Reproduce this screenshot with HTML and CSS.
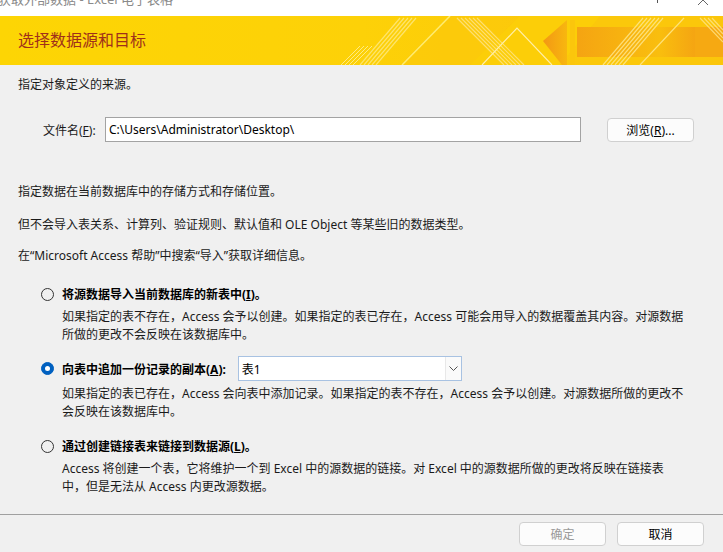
FILE: index.html
```html
<!DOCTYPE html>
<html lang="zh-CN">
<head>
<meta charset="utf-8">
<title>获取外部数据 - Excel 电子表格</title>
<link rel="stylesheet" href="styles.css">
</head>
<body>
<div class="window">
  <div class="titlebar">
    <span class="title-text">获取外部数据 - Excel 电子表格</span>
    <svg class="title-icons" width="723" height="16" viewBox="0 0 723 16">
      <line x1="657.5" y1="0" x2="657.5" y2="3" stroke="#555" stroke-width="1"/>
      <polyline points="698,5 703,0 708,5" fill="none" stroke="#666" stroke-width="1"/>
    </svg>
  </div>

  <div class="header">
    <svg class="header-art" width="723" height="49" viewBox="0 0 723 49" preserveAspectRatio="none">
      <defs>
        <linearGradient id="bg" x1="0" y1="0" x2="1" y2="0">
          <stop offset="0" stop-color="#fdd504"/>
          <stop offset="0.5" stop-color="#fdd108"/>
          <stop offset="1" stop-color="#fac40c"/>
        </linearGradient>
        <linearGradient id="arrow" x1="0" y1="0" x2="1" y2="0">
          <stop offset="0" stop-color="#f39714"/>
          <stop offset="1" stop-color="#f8b70f"/>
        </linearGradient>
        <linearGradient id="bar" x1="0" y1="0" x2="1" y2="0">
          <stop offset="0" stop-color="#f5a412"/>
          <stop offset="0.7" stop-color="#f9be0e"/>
          <stop offset="1" stop-color="#f5a512"/>
        </linearGradient>
      </defs>
      <rect width="723" height="49" fill="url(#bg)"/>
      <polygon points="400,49 450,0 723,0 723,49" fill="#fbc80b" opacity="0.6"/>
      <polygon points="470,49 520,0 600,0 560,49" fill="#fcd007" opacity="0.7"/>
      <g stroke="#fff2a0" stroke-width="1" opacity="0.8">
        <line x1="341" y1="49" x2="360" y2="30"/>
        <line x1="345" y1="49" x2="364" y2="30"/>
        <line x1="349" y1="49" x2="368" y2="30"/>
        <line x1="353" y1="49" x2="372" y2="30"/>
      </g>
      <g stroke="#ffe980" stroke-width="1.2" opacity="0.85">
        <line x1="360" y1="49" x2="400" y2="2"/>
        <line x1="364" y1="49" x2="404" y2="2"/>
        <line x1="368" y1="49" x2="408" y2="2"/>
        <line x1="372" y1="49" x2="412" y2="2"/>
        <line x1="376" y1="49" x2="416" y2="2"/>
      </g>
      <line x1="402" y1="49" x2="450" y2="0" stroke="#ffec70" stroke-width="1.5"/>
      <g stroke="#ffe58a" stroke-width="1.2" opacity="0.8">
        <line x1="457" y1="2" x2="504" y2="49"/>
        <line x1="461" y1="2" x2="508" y2="49"/>
        <line x1="465" y1="2" x2="512" y2="49"/>
        <line x1="469" y1="2" x2="516" y2="49"/>
        <line x1="473" y1="2" x2="520" y2="49"/>
        <line x1="477" y1="2" x2="524" y2="49"/>
      </g>
      <polyline points="482,49 517,12 552,49" fill="none" stroke="#ffefa8" stroke-width="1.2"/>
      <polygon points="543,25 567,4 567,49 562,49" fill="url(#arrow)"/>
      <rect x="577" y="11" width="118" height="30" fill="url(#bar)"/>
      <rect x="695" y="11" width="28" height="30" fill="#f6a912"/>
      <rect x="570" y="4" width="5" height="45" fill="#fbc60c"/>
      <g stroke="#ffe78c" stroke-width="1.2" opacity="0.85">
        <line x1="603" y1="49" x2="643" y2="2"/>
        <line x1="607" y1="49" x2="647" y2="2"/>
        <line x1="611" y1="49" x2="651" y2="2"/>
        <line x1="615" y1="49" x2="655" y2="2"/>
        <line x1="619" y1="49" x2="659" y2="2"/>
        <line x1="623" y1="49" x2="663" y2="2"/>
      </g>
      <line x1="640" y1="49" x2="684" y2="2" stroke="#ffe27a" stroke-width="1.2"/>
      <g stroke="#ffe58a" stroke-width="1.2" opacity="0.8">
        <line x1="700" y1="2" x2="723" y2="26"/>
        <line x1="704" y1="2" x2="723" y2="22"/>
        <line x1="708" y1="2" x2="723" y2="18"/>
        <line x1="712" y1="2" x2="723" y2="14"/>
      </g>
    </svg>
    <h1 class="header-title">选择数据源和目标</h1>
  </div>

  <div class="main">
    <p class="text first">指定对象定义的来源。</p>

    <div class="file-row">
      <label class="file-label">文件名(<u>F</u>):</label>
      <div class="file-input">C:\Users\Administrator\Desktop\</div>
      <button class="btn browse">浏览(<u>R</u>)...</button>
    </div>

    <p class="text p2">指定数据在当前数据库中的存储方式和存储位置。</p>
    <p class="text p3">但不会导入表关系、计算列、验证规则、默认值和 OLE Object 等某些旧的数据类型。</p>
    <p class="text p4">在“Microsoft Access 帮助”中搜索“导入”获取详细信息。</p>

    <div class="option o1">
      <span class="radio"></span>
      <span class="opt-label">将源数据导入当前数据库的新表中(<u>I</u>)。</span>
    </div>
    <p class="desc d1">如果指定的表不存在，Access 会予以创建。如果指定的表已存在，Access 可能会用导入的数据覆盖其内容。对源数据<br>所做的更改不会反映在该数据库中。</p>

    <div class="option o2">
      <span class="radio checked"></span>
      <span class="opt-label">向表中追加一份记录的副本(<u>A</u>):</span>
      <div class="combo">
        <span class="combo-text">表1</span>
        <span class="combo-btn">
          <svg width="9" height="5" viewBox="0 0 9 5"><polyline points="0.5,0.5 4.5,4.5 8.5,0.5" fill="none" stroke="#555" stroke-width="1"/></svg>
        </span>
      </div>
    </div>
    <p class="desc d2">如果指定的表已存在，Access 会向表中添加记录。如果指定的表不存在，Access 会予以创建。对源数据所做的更改不<br>会反映在该数据库中。</p>

    <div class="option o3">
      <span class="radio"></span>
      <span class="opt-label">通过创建链接表来链接到数据源(<u>L</u>)。</span>
    </div>
    <p class="desc d3">Access 将创建一个表，它将维护一个到 Excel 中的源数据的链接。对 Excel 中的源数据所做的更改将反映在链接表<br>中，但是无法从 Access 内更改源数据。</p>
  </div>

  <div class="footer">
    <button class="btn disabled">确定</button>
    <button class="btn">取消</button>
  </div>
</div>
</body>
</html>
```

FILE: styles.css
```css
* { box-sizing: border-box; }
html, body {
  margin: 0;
  padding: 0;
  width: 723px;
  height: 552px;
  overflow: hidden;
  background: #f0f0f0;
}
body {
  font-family: "Noto Sans", "Noto Sans CJK SC", sans-serif;
  font-size: 12px;
  color: #1a1a1a;
}
.window {
  width: 723px;
  height: 552px;
  display: flex;
  flex-direction: column;
}
.titlebar {
  height: 16px;
  background: #ffffff;
  position: relative;
  overflow: hidden;
  flex: none;
}
.title-text {
  position: absolute;
  left: -2px;
  top: -9px;
  font-size: 13px;
  line-height: 16px;
  color: #8a8a8a;
  white-space: nowrap;
}
.title-icons {
  position: absolute;
  left: 0;
  top: 0;
}
.header {
  height: 49px;
  position: relative;
  flex: none;
  overflow: hidden;
}
.header-art {
  position: absolute;
  left: 0;
  top: 0;
}
.header-title {
  position: relative;
  margin: 0;
  padding-left: 18px;
  line-height: 49px;
  font-size: 16px;
  font-weight: normal;
  color: #a0301a;
}
.main {
  flex: 1;
  padding-top: 11px;
}
.text {
  margin: 0;
  padding-left: 18px;
  line-height: 18px;
  white-space: nowrap;
}
.file-row {
  display: flex;
  align-items: center;
  height: 25px;
  margin-top: 23px;
  padding-left: 43px;
}
.file-label {
  width: 62px;
  flex: none;
}
.file-input {
  width: 476px;
  height: 25px;
  border: 1px solid #a3a3a3;
  background: #ffffff;
  padding-left: 3px;
  line-height: 23px;
  flex: none;
  color: #000;
}
.btn {
  font-family: inherit;
  font-size: 12px;
  height: 24px;
  width: 87px;
  background: #fcfcfc;
  border: 1px solid #d0d0d0;
  border-radius: 4px;
  color: #000;
  padding: 0;
}
.browse {
  margin-left: 26px;
  margin-top: 1px;
}
.p2 { margin-top: 41px; }
.p3 { margin-top: 15px; }
.p4 { margin-top: 13px; }
.option {
  display: flex;
  align-items: center;
  padding-left: 41px;
  height: 18px;
}
.o1 { margin-top: 20px; }
.o2 { margin-top: 12px; height: 25px; }
.o3 { margin-top: 16px; }
.radio {
  width: 13px;
  height: 13px;
  border-radius: 50%;
  border: 1px solid #333;
  background: #f0f0f0;
  flex: none;
  margin-right: 8px;
  position: relative;
}
.radio.checked {
  background: #0060c0;
  border-color: #0060c0;
}
.radio.checked::after {
  content: "";
  position: absolute;
  left: 3px;
  top: 3px;
  width: 5px;
  height: 5px;
  border-radius: 50%;
  background: #fff;
}
.opt-label {
  font-weight: bold;
  color: #000;
  white-space: nowrap;
}
.desc {
  margin: 0;
  padding-left: 62px;
  line-height: 18px;
  white-space: nowrap;
}
.d1 { margin-top: 5px; }
.d2 { margin-top: 4px; }
.d3 { margin-top: 5px; }
.combo {
  margin-left: 12px;
  width: 224px;
  height: 25px;
  border: 1px solid #a8c2e2;
  background: #fff;
  display: flex;
  align-items: center;
  justify-content: space-between;
}
.combo-text {
  padding-left: 3px;
  color: #000;
}
.combo-btn {
  width: 16px;
  height: 23px;
  border-left: 1px solid #e8e8e8;
  background: #fafafa;
  display: flex;
  align-items: center;
  justify-content: center;
}
.footer {
  height: 38px;
  flex: none;
  border-top: 1px solid #a0a0a0;
  display: flex;
  justify-content: flex-end;
  align-items: flex-start;
  gap: 11px;
  padding-top: 7px;
  padding-right: 19px;
}
.btn.disabled {
  color: #9a9a9a;
}
```
